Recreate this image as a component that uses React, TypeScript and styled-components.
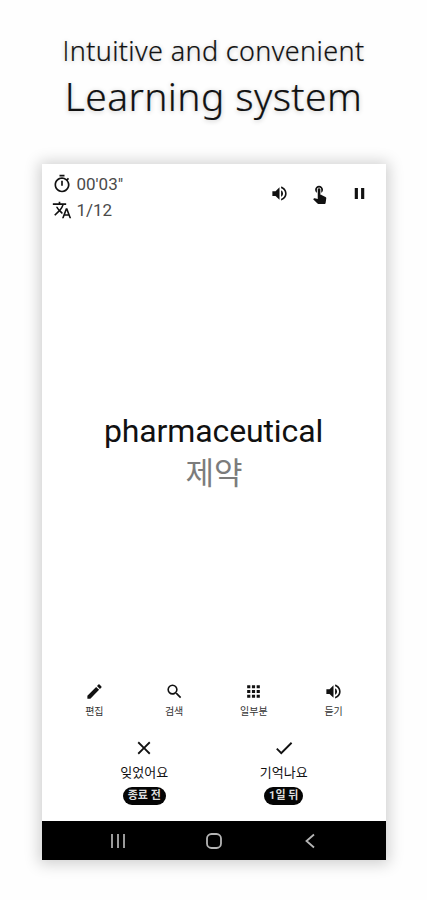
import React from 'react';
import styled, { createGlobalStyle } from 'styled-components';
import {
  MdOutlineTimer, MdTranslate, MdVolumeUp, MdTouchApp, MdPause,
  MdEdit, MdSearch, MdApps, MdClose, MdCheck,
} from 'react-icons/md';

const GlobalStyle = createGlobalStyle`
  * { box-sizing: border-box; }
  body { margin: 0; background: #fefefe; }
`;

const Page = styled.main`
  width: 427px;
  height: 900px;
  padding-top: 34px;
  display: flex;
  flex-direction: column;
  align-items: center;
  overflow: hidden;
  background: #fefefe;
  color: #111;
  font-family: Roboto, 'Noto Sans CJK KR', sans-serif;
`;

const Heading = styled.header`
  height: 130px;
  flex: none;
  display: flex;
  flex-direction: column;
  align-items: center;
  font-family: 'Noto Sans', sans-serif;
  font-weight: 300;
  white-space: nowrap;
  text-shadow: 0 1px 5px rgba(0, 0, 0, 0.24);
`;

const Tagline = styled.div`
  font-size: 27px;
  line-height: 34px;
  letter-spacing: 0.36px;
  -webkit-text-stroke: 0.2px #111;

  &::first-letter { font-family: 'Open Sans', sans-serif; }
`;

const Title = styled.h1`
  margin: 4px 0 0;
  font-size: 39px;
  font-weight: 300;
  line-height: 48px;
  letter-spacing: 0.4px;
  -webkit-text-stroke: 0.2px #111;
`;

const Phone = styled.section`
  width: 344px;
  height: 696px;
  flex: none;
  display: flex;
  flex-direction: column;
  background: #fff;
  box-shadow: 0 1px 14px 3px rgba(0, 0, 0, 0.19);
`;

const TopBar = styled.div`
  height: 62px;
  padding: 7px 17px 0 10px;
  display: flex;
  justify-content: space-between;
`;

const Stats = styled.div`
  display: flex;
  flex-direction: column;
`;

const Stat = styled.div`
  height: 26px;
  display: flex;
  align-items: center;
  gap: 5px;
  color: #4a4a4a;
  font-size: 17px;
  svg { color: #111; }
`;

const Controls = styled.div`
  height: 44px;
  display: flex;
  align-items: center;
  gap: 20px;
`;

const Card = styled.div`
  flex: 1;
  padding-top: 184px;
  display: flex;
  flex-direction: column;
  align-items: center;
`;

const Word = styled.div`
  font-size: 32px;
  line-height: 42px;
  letter-spacing: -0.12px;
`;

const Meaning = styled.div`
  margin-top: -2px;
  padding-left: 1px;
  font-family: 'Noto Sans CJK KR', sans-serif;
  font-size: 31px;
  line-height: 42px;
  color: #7c7c7c;
`;

const Tools = styled.div`
  height: 55px;
  padding: 0 12px 0 13px;
  display: grid;
  grid-template-columns: repeat(4, 1fr);
`;

const Tool = styled.div`
  display: flex;
  flex-direction: column;
  align-items: center;
  gap: 4px;
  font-size: 10px;
  line-height: 14px;
  color: #333;
  svg { color: #111; }
`;

const Answers = styled.div`
  height: 84px;
  padding: 0 32px 0 33px;
  display: grid;
  grid-template-columns: 1fr 1fr;
`;

const Answer = styled.div`
  display: flex;
  flex-direction: column;
  align-items: center;
  font-size: 13px;
`;

const AnswerLabel = styled.div`
  margin-top: 3px;
  line-height: 22px;
`;

const Pill = styled.div<{ $width: number }>`
  width: ${(p) => p.$width}px;
  height: 18px;
  margin-top: 3px;
  border-radius: 9px;
  background: #050505;
  color: #ddd;
  font-size: 11px;
  font-weight: 700;
  line-height: 17px;
  text-align: center;
`;

const NavBar = styled.nav`
  height: 39px;
  padding: 0 28px;
  display: grid;
  grid-template-columns: repeat(3, 1fr);
  align-items: center;
  justify-items: center;
  background: #000;
`;

const tools = [
  { label: '편집', Icon: MdEdit },
  { label: '검색', Icon: MdSearch },
  { label: '일부분', Icon: MdApps },
  { label: '듣기', Icon: MdVolumeUp },
];

const answers = [
  { label: '잊었어요', due: '종료 전', width: 43, Icon: MdClose },
  { label: '기억나요', due: '1일 뒤', width: 39, Icon: MdCheck },
];

export default function App() {
  return (
    <Page>
      <GlobalStyle />
      <Heading>
        <Tagline>Intuitive and convenient</Tagline>
        <Title>Learning system</Title>
      </Heading>
      <Phone>
        <TopBar>
          <Stats>
            <Stat><MdOutlineTimer size={20} />00'03"</Stat>
            <Stat><MdTranslate size={20} />1/12</Stat>
          </Stats>
          <Controls>
            <MdVolumeUp size={19} />
            <MdTouchApp size={21} />
            <MdPause size={19} />
          </Controls>
        </TopBar>
        <Card>
          <Word>pharmaceutical</Word>
          <Meaning>제약</Meaning>
        </Card>
        <Tools>
          {tools.map(({ label, Icon }) => (
            <Tool key={label}><Icon size={19} />{label}</Tool>
          ))}
        </Tools>
        <Answers>
          {answers.map(({ label, due, width, Icon }) => (
            <Answer key={label}>
              <Icon size={22} />
              <AnswerLabel>{label}</AnswerLabel>
              <Pill $width={width}>{due}</Pill>
            </Answer>
          ))}
        </Answers>
        <NavBar>
          <svg width="16" height="16" fill="none" stroke="#b5b5b5" strokeWidth="1.7">
            <path d="M2 1v14M8 1v14M14 1v14" />
          </svg>
          <svg width="18" height="18" fill="none" stroke="#b5b5b5" strokeWidth="1.8">
            <rect x="2" y="2" width="14" height="14" rx="4.5" />
          </svg>
          <svg width="16" height="16" fill="none" stroke="#b5b5b5" strokeWidth="1.8">
            <path d="M12 1.5 4.5 8l7.5 6.5" />
          </svg>
        </NavBar>
      </Phone>
    </Page>
  );
}
